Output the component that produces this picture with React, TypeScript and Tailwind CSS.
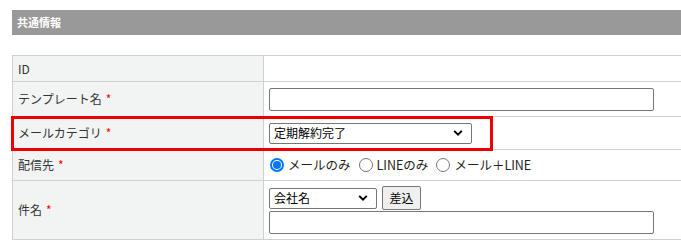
import React from 'react';

const font = { fontFamily: '"Noto Sans CJK JP", "Noto Sans", sans-serif' };

function Req() {
  return <span className="ml-1 text-[#ff0000]">*</span>;
}

function Chevron() {
  return (
    <svg width="10" height="7" viewBox="0 0 10 7" className="absolute right-[8px] top-1/2 -translate-y-1/2">
      <path d="M1.2 1.4 L5 5.2 L8.8 1.4" fill="none" stroke="#000" strokeWidth="2" />
    </svg>
  );
}

function FakeSelect({ value, className }: { value: string; className: string }) {
  return (
    <div
      className={`relative flex items-center rounded-[2px] border border-[#767676] bg-white pl-[4px] text-[12px] text-black ${className}`}
    >
      {value}
      <Chevron />
    </div>
  );
}

function Radio({ checked, label }: { checked?: boolean; label: string }) {
  return (
    <span className="flex items-center gap-[4px]">
      {checked ? (
        <span className="flex h-[14px] w-[14px] items-center justify-center rounded-full border-2 border-[#0075ff] bg-white">
          <span className="h-[8px] w-[8px] rounded-full bg-[#0075ff]" />
        </span>
      ) : (
        <span className="h-[14px] w-[14px] rounded-full border border-[#767676] bg-white" />
      )}
      <span>{label}</span>
    </span>
  );
}

export default function App() {
  const th = 'w-[251px] border border-[#d0d0d0] bg-[#f2f3f3] px-[5px] text-left align-middle font-normal';
  const td = 'border border-[#d0d0d0] bg-white px-[5px] align-middle';

  return (
    <div className="h-[246px] w-[681px] overflow-hidden bg-white pl-[12px] pt-[10px] text-[12px] text-[#333]" style={font}>
      <div className="flex h-[25px] items-center bg-[#999999] pl-[5px] text-[11px] font-bold text-white">共通情報</div>

      <div className="relative mt-[20px]">
        <table className="w-[720px] border-collapse">
          <tbody>
            <tr className="h-[26px]">
              <th className={th}>ID</th>
              <td className={td}></td>
            </tr>
            <tr className="h-[35px]">
              <th className={th}>
                テンプレート名
                <Req />
              </th>
              <td className={td}>
                <div className="h-[23px] w-[385px] rounded-[2px] border border-[#767676] bg-white" />
              </td>
            </tr>
            <tr className="h-[33px]">
              <th className={th}>
                メールカテゴリ
                <Req />
              </th>
              <td className={td}>
                <FakeSelect value="定期解約完了" className="h-[21px] w-[203px]" />
              </td>
            </tr>
            <tr className="h-[31px]">
              <th className={th}>
                配信先
                <Req />
              </th>
              <td className={td}>
                <div className="flex items-center gap-[8px] pl-[1px] text-[12.5px] text-[#222]">
                  <Radio checked label="メールのみ" />
                  <Radio label="LINEのみ" />
                  <Radio label="メール＋LINE" />
                </div>
              </td>
            </tr>
            <tr className="h-[59px]">
              <th className={th}>
                件名
                <Req />
              </th>
              <td className={td}>
                <div className="flex items-center gap-[5px]">
                  <FakeSelect value="会社名" className="h-[21px] w-[108px]" />
                  <button className="flex h-[24px] w-[39px] items-center justify-center rounded-[2px] border border-[#767676] bg-[#efefef] text-[12px] text-black">
                    差込
                  </button>
                </div>
                <div className="mt-[1px] h-[23px] w-[385px] rounded-[2px] border border-[#767676] bg-white" />
              </td>
            </tr>
          </tbody>
        </table>
        <div className="pointer-events-none absolute left-[-1px] top-[61px] h-[35px] w-[482px] border-[3px] border-[#ee0000]" />
      </div>
    </div>
  );
}
